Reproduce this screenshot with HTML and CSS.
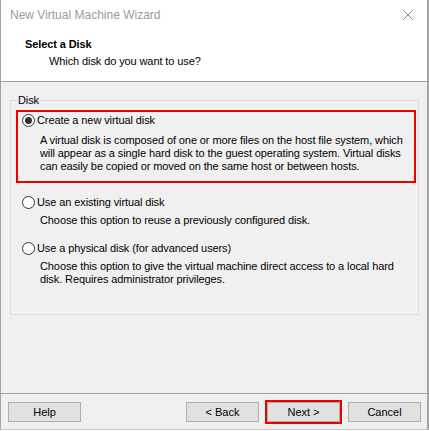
FILE: index.html
```html
<!DOCTYPE html>
<html lang="en">
<head>
    <meta charset="UTF-8">
    <meta name="viewport" content="width=device-width, initial-scale=1.0">
    <title>New Virtual Machine Wizard</title>
    <link rel="stylesheet" href="styles.css">
</head>
<body>
    <div class="window">
        <div class="titlebar">
            <span class="title">New Virtual Machine Wizard</span>
            <svg class="close" width="12" height="12" viewBox="0 0 12 12">
                <path d="M1 1 L11 11 M11 1 L1 11" stroke="#8a8a8a" stroke-width="1" fill="none"/>
            </svg>
        </div>
        <div class="header">
            <div class="header-title">Select a Disk</div>
            <div class="header-sub">Which disk do you want to use?</div>
        </div>
        <div class="main">
            <fieldset class="group">
                <legend>Disk</legend>
                <div class="option selected">
                    <div class="radio-line"><span class="radio checked"></span>Create a new virtual disk</div>
                    <div class="desc">A virtual disk is composed of one or more files on the host file system, which will appear as a single hard disk to the guest operating system. Virtual disks can easily be copied or moved on the same host or between hosts.</div>
                </div>
                <div class="option second">
                    <div class="radio-line"><span class="radio"></span>Use an existing virtual disk</div>
                    <div class="desc">Choose this option to reuse a previously configured disk.</div>
                </div>
                <div class="option third">
                    <div class="radio-line"><span class="radio"></span>Use a physical disk (for advanced users)</div>
                    <div class="desc">Choose this option to give the virtual machine direct access to a local hard disk. Requires administrator privileges.</div>
                </div>
            </fieldset>
        </div>
        <div class="footer">
            <button type="button" class="btn">Help</button>
            <div class="spacer"></div>
            <button type="button" class="btn">&lt; Back</button>
            <button type="button" class="btn next">Next &gt;</button>
            <button type="button" class="btn">Cancel</button>
        </div>
    </div>
</body>
</html>
```

FILE: styles.css
```css
/* Windows style wizard dialog */
body {
    margin: 0;
    background-color: #ffffff;
    font-family: "Liberation Sans", Arial, sans-serif;
    font-size: 11px;
    letter-spacing: -0.1px;
    color: #000;
}

.window {
    width: 429px;
    height: 430px;
    box-sizing: border-box;
    display: flex;
    flex-direction: column;
    background-color: #f0f0f0;
    border-left: 1px solid #a3a3a3;
    border-right: 2px solid #a3a3a3;
    border-bottom: 1px solid #c8c8c8;
}

.titlebar {
    height: 31px;
    flex-shrink: 0;
    background-color: #fff;
    display: flex;
    align-items: center;
    padding-left: 9px;
    padding-right: 13px;
}

.title {
    flex: 1;
    font-size: 12px;
    letter-spacing: 0;
    color: #9b9b9b;
    padding-bottom: 1px;
}

.close {
    margin-bottom: 2px;
}

.header {
    height: 44px;
    flex-shrink: 0;
    background-color: #fff;
    border-bottom: 1px solid #a0a0a0;
    padding-top: 6px;
}

.header-title {
    font-weight: bold;
    padding-left: 24px;
    line-height: 14px;
}

.header-sub {
    padding-left: 48px;
    margin-top: 3px;
    line-height: 14px;
}

.main {
    flex: 1;
}

.group {
    margin: 11px 8px 0 9px;
    padding: 0 0 28px 0;
    border: 1px solid #dcdcdc;
}

.group legend {
    padding: 0 1px;
    margin-left: 6px;
    line-height: 14px;
}

.option {
    padding-left: 4px;
}

.option.selected {
    width: 400px;
    box-sizing: border-box;
    margin: 3px 0 0 5px;
    padding: 1px 0 8px 4px;
    border: 2px solid #ee0000;
}

.option.second,
.option.third {
    margin-left: 7px;
}

.option.second {
    margin-top: 12px;
}

.option.third {
    margin-top: 14px;
}

.radio-line {
    display: flex;
    align-items: center;
    line-height: 14px;
}

.radio {
    width: 13px;
    height: 13px;
    box-sizing: border-box;
    border: 1px solid #333;
    border-radius: 50%;
    background-color: #fff;
    margin-right: 2px;
    display: flex;
    align-items: center;
    justify-content: center;
}

.radio.checked::after {
    content: "";
    width: 7px;
    height: 7px;
    border-radius: 50%;
    background-color: #333;
}

.desc {
    margin-left: 18px;
    margin-top: 5px;
    line-height: 13px;
}

.option.selected .desc {
    margin-top: 7px;
}

.footer {
    flex-shrink: 0;
    display: flex;
    gap: 8px;
    border-top: 1px solid #a0a0a0;
    padding: 8px 6px 7px 7px;
}

.spacer {
    flex: 1;
}

.btn {
    width: 73px;
    height: 20px;
    padding: 0;
    font-family: "Liberation Sans", Arial, sans-serif;
    font-size: 11px;
    color: #000;
    background-color: #e1e1e1;
    border: 1px solid #adadad;
}

.btn.next {
    outline: 2px solid #ee0000;
    outline-offset: 0;
}
```
